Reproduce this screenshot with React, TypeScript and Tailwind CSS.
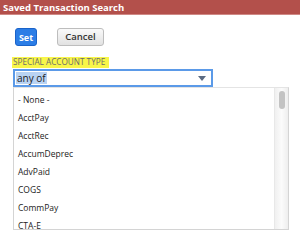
import React from "react";

const OPTIONS = [
  "- None -",
  "AcctPay",
  "AcctRec",
  "AccumDeprec",
  "AdvPaid",
  "COGS",
  "CommPay",
  "CTA-E",
];

export default function App() {
  return (
    <div
      className="flex h-[243px] w-[300px] flex-col overflow-hidden bg-white"
      style={{ fontFamily: '"Open Sans", "Liberation Sans", sans-serif' }}
    >
      {/* header bar */}
      <div className="flex h-[15px] flex-none items-end border-b border-[#cf8985] bg-[#b3504b] pl-[3px]">
        <span className="text-[9.5px] font-bold leading-[13px] text-white">
          Saved Transaction Search
        </span>
      </div>

      {/* buttons */}
      <div className="flex flex-none gap-[20px] pl-[15px] pt-[13px]">
        <button
          type="button"
          className="h-[18px] w-[22px] rounded-[3px] border border-[#1a63c9] bg-[#2b7de6] text-[9px] font-bold leading-none text-white"
        >
          Set
        </button>
        <button
          type="button"
          className="h-[18px] w-[47px] rounded-[3px] border border-[#bdbdbd] bg-gradient-to-b from-[#fafafa] to-[#e2e2e2] text-[9.5px] font-semibold leading-none text-[#333]"
        >
          Cancel
        </button>
      </div>

      {/* field label */}
      <div className="flex flex-none pl-[12px] pt-[11px]">
        <div className="flex h-[11px] items-center bg-[#f8f648] pl-[1px] pr-[4px] text-[8.2px] leading-none text-[#6c6c6c]">
          SPECIAL ACCOUNT TYPE
        </div>
      </div>

      <div className="ml-[13px] mt-[1px] flex h-[18px] w-[200px] flex-none items-center justify-between border-2 border-[#5b9ae8] bg-white pl-[1px] pr-[5px]">
        <span className="bg-[#b9d3f3] px-[1px] text-[10px] leading-[12px] text-[#222]">
          any of
        </span>
        <svg width="8" height="5" viewBox="0 0 8 5" aria-hidden="true">
          <path d="M0 0 L8 0 L4 5 Z" fill="#5b6b82" />
        </svg>
      </div>

      {/* listbox */}
      <div className="ml-[13px] flex h-[143px] w-[276px] flex-none border border-[#d4d4d4] border-t-[#e4e4e4] bg-white">
        <div className="flex-1 overflow-hidden pl-[4px] pt-[3px]">
          {OPTIONS.map((o) => (
            <div
              key={o}
              className="h-[18px] text-[8.5px] leading-[18px] text-[#222]"
            >
              {o}
            </div>
          ))}
        </div>
        <div className="flex w-[14px] justify-center border-l border-[#e8e8e8] bg-gradient-to-r from-[#f0f0f0] via-[#fbfbfb] to-[#eeeeee] pt-[3px]">
          <div className="h-[18px] w-[6px] rounded-full bg-[#c3c3c3]" />
        </div>
      </div>
    </div>
  );
}
